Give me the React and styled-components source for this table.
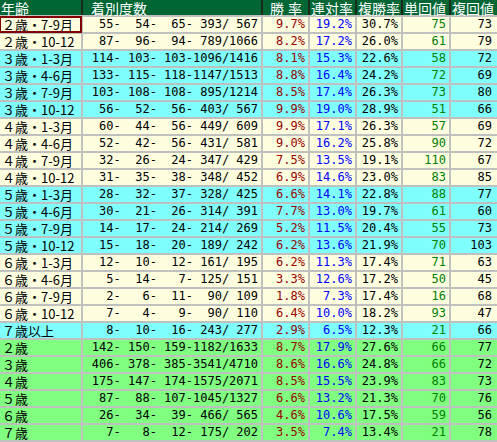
import styled, { createGlobalStyle } from 'styled-components';

const GlobalStyle = createGlobalStyle`
  body {
    margin: 0;
    background: #ffffff;
  }
`;

const COLS = '81px 178px 45px 45px 44px 46px 46px';

const BG = {
  yellow: '#ffffe0',
  cyan: '#80ffff',
  green: '#80ff80',
};

const rows = [
  ['２歳・7-9月', [55, 54, 65, 393, 567], '9.7', '19.2', '30.7', 75, 73, 'yellow'],
  ['２歳・10-12', [87, 96, 94, 789, 1066], '8.2', '17.2', '26.0', 61, 79, 'yellow'],
  ['３歳・1-3月', [114, 103, 103, 1096, 1416], '8.1', '15.3', '22.6', 58, 72, 'cyan'],
  ['３歳・4-6月', [133, 115, 118, 1147, 1513], '8.8', '16.4', '24.2', 72, 69, 'cyan'],
  ['３歳・7-9月', [103, 108, 108, 895, 1214], '8.5', '17.4', '26.3', 73, 80, 'cyan'],
  ['３歳・10-12', [56, 52, 56, 403, 567], '9.9', '19.0', '28.9', 51, 66, 'cyan'],
  ['４歳・1-3月', [60, 44, 56, 449, 609], '9.9', '17.1', '26.3', 57, 69, 'yellow'],
  ['４歳・4-6月', [52, 42, 56, 431, 581], '9.0', '16.2', '25.8', 90, 72, 'yellow'],
  ['４歳・7-9月', [32, 26, 24, 347, 429], '7.5', '13.5', '19.1', 110, 67, 'yellow'],
  ['４歳・10-12', [31, 35, 38, 348, 452], '6.9', '14.6', '23.0', 83, 85, 'yellow'],
  ['５歳・1-3月', [28, 32, 37, 328, 425], '6.6', '14.1', '22.8', 88, 77, 'cyan'],
  ['５歳・4-6月', [30, 21, 26, 314, 391], '7.7', '13.0', '19.7', 61, 60, 'cyan'],
  ['５歳・7-9月', [14, 17, 24, 214, 269], '5.2', '11.5', '20.4', 55, 73, 'cyan'],
  ['５歳・10-12', [15, 18, 20, 189, 242], '6.2', '13.6', '21.9', 70, 103, 'cyan'],
  ['６歳・1-3月', [12, 10, 12, 161, 195], '6.2', '11.3', '17.4', 71, 63, 'yellow'],
  ['６歳・4-6月', [5, 14, 7, 125, 151], '3.3', '12.6', '17.2', 50, 45, 'yellow'],
  ['６歳・7-9月', [2, 6, 11, 90, 109], '1.8', '7.3', '17.4', 16, 68, 'yellow'],
  ['６歳・10-12', [7, 4, 9, 90, 110], '6.4', '10.0', '18.2', 93, 47, 'yellow'],
  ['７歳以上', [8, 10, 16, 243, 277], '2.9', '6.5', '12.3', 21, 66, 'cyan'],
  ['２歳', [142, 150, 159, 1182, 1633], '8.7', '17.9', '27.6', 66, 77, 'green'],
  ['３歳', [406, 378, 385, 3541, 4710], '8.6', '16.6', '24.8', 66, 72, 'green'],
  ['４歳', [175, 147, 174, 1575, 2071], '8.5', '15.5', '23.9', 83, 73, 'green'],
  ['５歳', [87, 88, 107, 1045, 1327], '6.6', '13.2', '21.3', 70, 76, 'green'],
  ['６歳', [26, 34, 39, 466, 565], '4.6', '10.6', '17.5', 59, 56, 'green'],
  ['７歳', [7, 8, 12, 175, 202], '3.5', '7.4', '13.4', 21, 78, 'green'],
];

const pad = n => String(n).padStart(4, ' ');
const formatCounts = ([a, b, c, d, e]) => `${pad(a)}-${pad(b)}-${pad(c)}-${pad(d)}/${pad(e)}`;

export default function App() {
  return (
    <>
      <GlobalStyle />
      <Table>
        <HeaderRow>
          <HeadCell>年齢</HeadCell>
          <HeadCell $indent>着別度数</HeadCell>
          <HeadCell $right>勝率</HeadCell>
          <HeadCell>連対率</HeadCell>
          <HeadCell>複勝率</HeadCell>
          <HeadCell>単回値</HeadCell>
          <HeadCell>複回値</HeadCell>
        </HeaderRow>
        {rows.map(([age, counts, win, place, show, tan, fuku, bg], i) => (
          <Row key={age + i} $bg={BG[bg]}>
            <AgeCell $selected={i === 0}>{age}</AgeCell>
            <NumCell>{formatCounts(counts)}</NumCell>
            <NumCell $color="#990000">{win}%</NumCell>
            <NumCell $color="#0000ff">{place}%</NumCell>
            <NumCell>{show}%</NumCell>
            <NumCell $color="#008000">{tan}</NumCell>
            <NumCell $last>{fuku}</NumCell>
          </Row>
        ))}
      </Table>
    </>
  );
}

const Table = styled.div`
  width: 497px;
  display: flex;
  flex-direction: column;
  gap: 2px;
  padding-bottom: 2px;
  background: #c0c0c0;
`;

const HeaderRow = styled.div`
  display: grid;
  grid-template-columns: ${COLS};
  column-gap: 2px;
  height: 15px;
  background: #1c2a1c;
`;

const HeadCell = styled.div`
  display: flex;
  align-items: center;
  justify-content: ${props => (props.$right ? 'flex-end' : 'flex-start')};
  height: 15px;
  background: #006633;
  color: #ffffff;
  font-family: 'Noto Sans CJK JP', sans-serif;
  font-size: 14px;
  line-height: 14px;
  white-space: nowrap;
  padding-left: ${props => (props.$indent ? '8px' : '1px')};
  padding-right: ${props => (props.$right ? '2px' : '0')};
  letter-spacing: ${props => (props.$right ? '4px' : '0')};
`;

const Row = styled.div`
  display: grid;
  grid-template-columns: ${COLS};
  column-gap: 2px;
  height: 15px;

  & > div {
    background: ${props => props.$bg};
  }
`;

const AgeCell = styled.div`
  position: relative;
  z-index: 1;
  display: flex;
  align-items: center;
  height: 15px;
  padding-left: 2px;
  font-family: 'Noto Sans CJK JP', sans-serif;
  font-size: 13px;
  line-height: 13px;
  color: #000000;
  white-space: nowrap;
  outline: ${props => (props.$selected ? '2px solid #800000' : 'none')};
  outline-offset: -1px;
`;

const NumCell = styled.div`
  font-family: 'DejaVu Sans Mono', 'Noto Sans CJK JP', monospace;
  font-size: 12px;
  line-height: 15px;
  text-align: right;
  white-space: pre;
  padding-right: ${props => (props.$last ? '5px' : '3px')};
  color: ${props => props.$color || '#000000'};
`;
